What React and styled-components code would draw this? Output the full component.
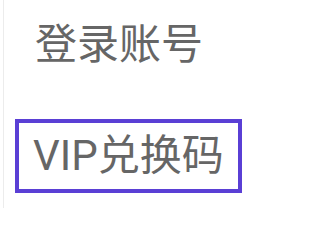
import React from 'react';
import styled, { createGlobalStyle } from 'styled-components';

const GlobalStyle = createGlobalStyle`
  html, body {
    margin: 0;
    padding: 0;
    background: #ffffff;
  }
  body {
    font-family: Roboto, "Noto Sans CJK SC", sans-serif;
  }
`;

const Panel = styled.div`
  margin-left: 3px;
  min-height: 208px;
  box-sizing: border-box;
  border-left: 1px solid #ececec;
  display: flex;
  flex-direction: column;
  padding: 24px 0 0 11px;
`;

const MenuItem = styled.div`
  font-size: 42px;
  line-height: 42px;
  color: #666666;
  white-space: nowrap;
  padding-left: ${props => (props.$boxed ? '14px' : '20px')};
  ${props =>
    props.$boxed &&
    `
    margin-top: 53px;
    width: 227px;
    height: 74px;
    box-sizing: border-box;
    border: 4px solid #5a3fd5;
    display: flex;
    align-items: center;
  `}
`;

export default function App() {
  return (
    <>
      <GlobalStyle />
      <Panel>
        <MenuItem>登录账号</MenuItem>
        <MenuItem $boxed>VIP兑换码</MenuItem>
      </Panel>
    </>
  );
}
